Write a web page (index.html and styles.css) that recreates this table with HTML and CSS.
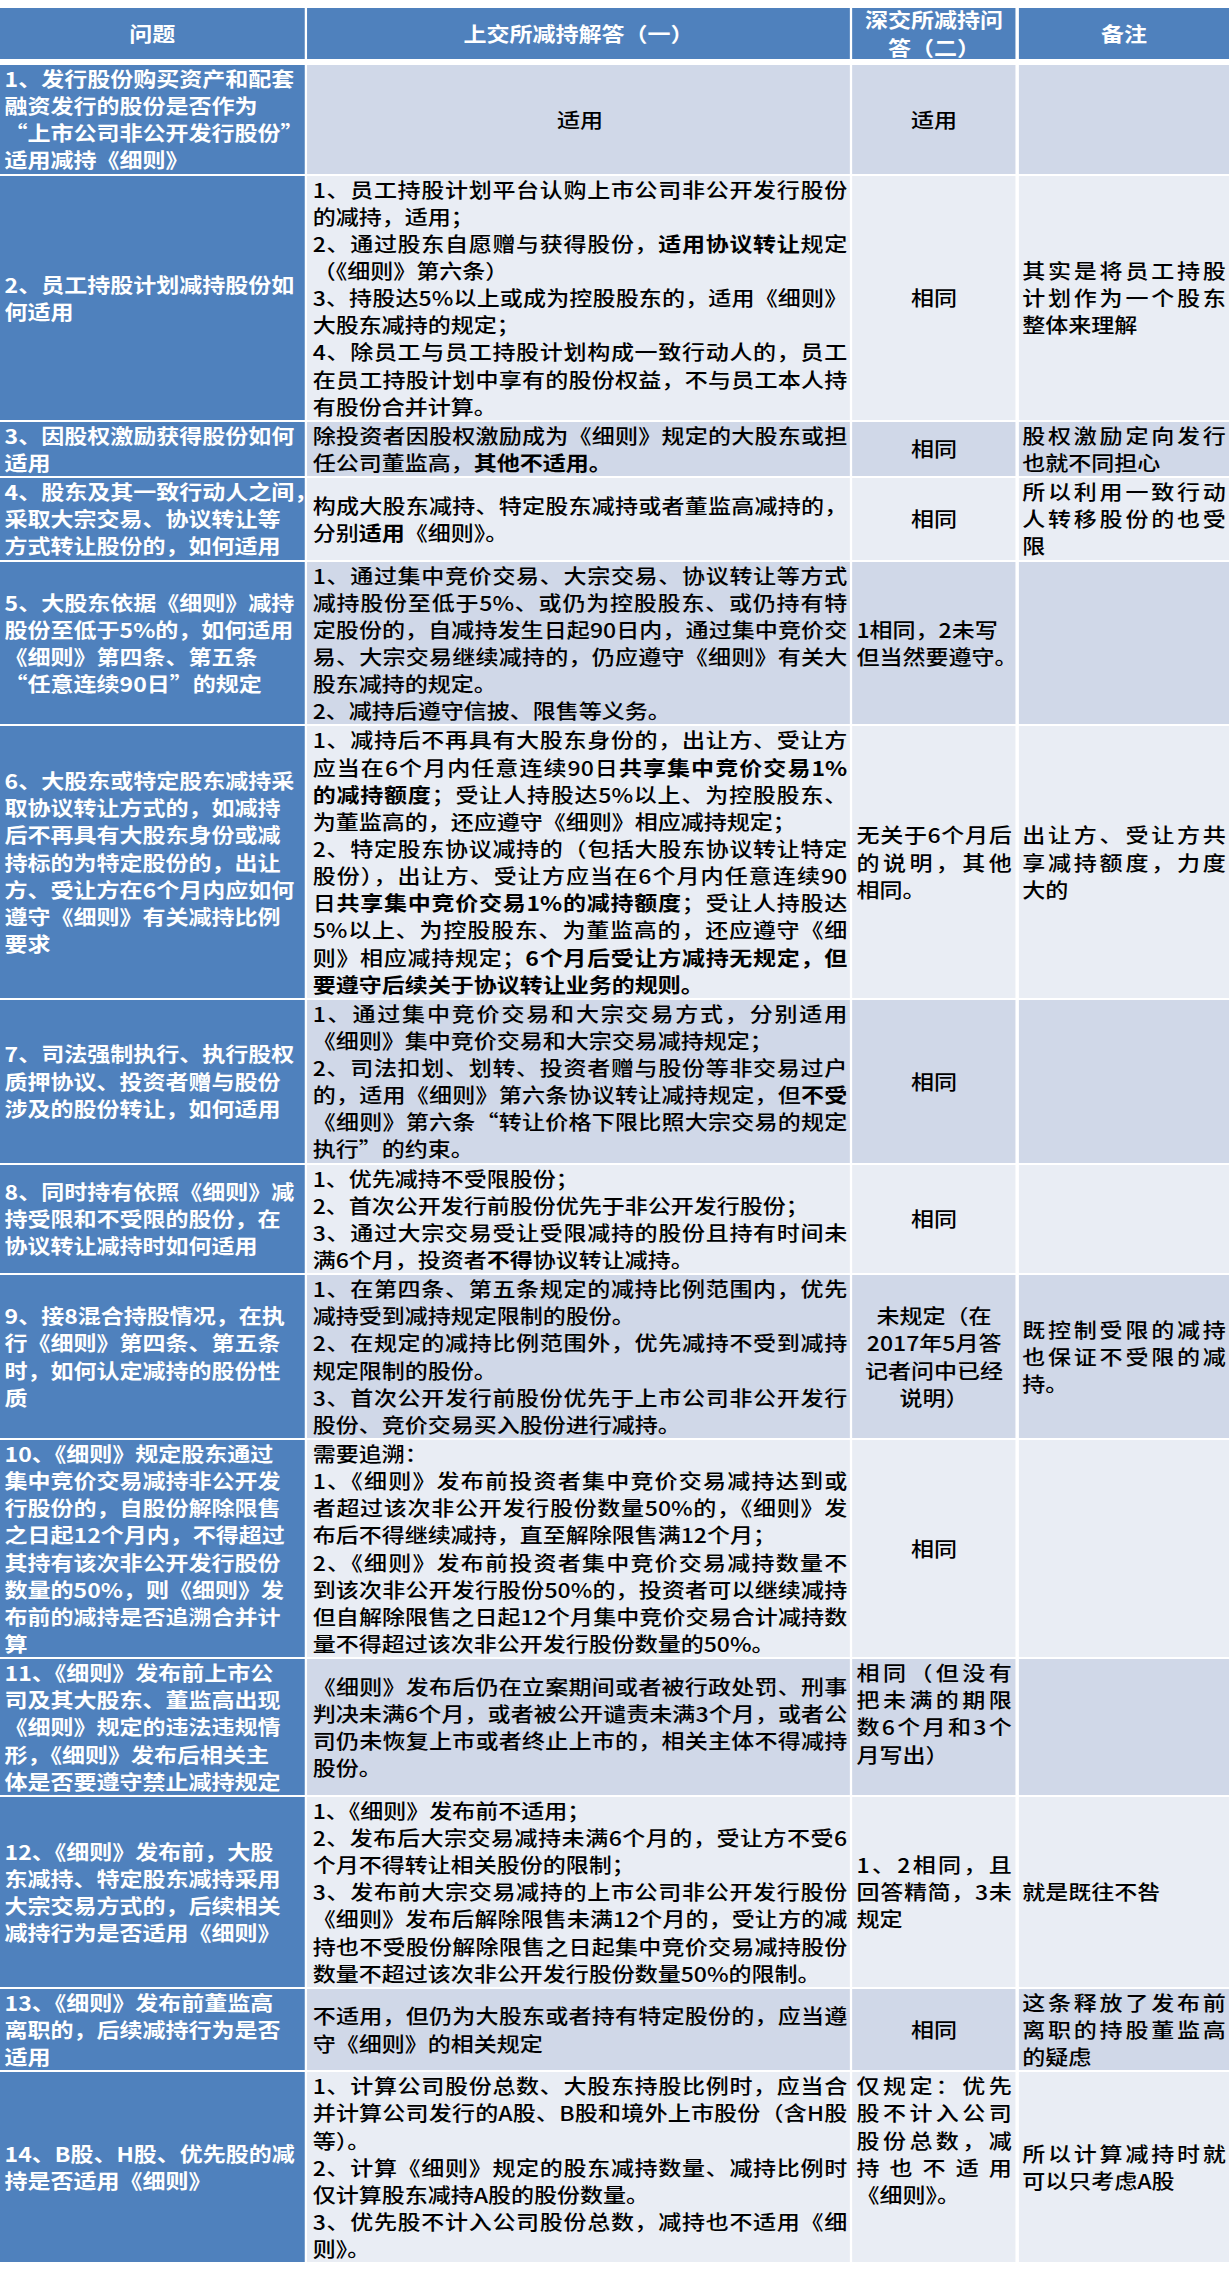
FILE: index.html
```html
<!DOCTYPE html>
<html lang="zh-CN">
<head>
<meta charset="utf-8">
<title>减持细则问答对比</title>
<link rel="stylesheet" href="styles.css">
</head>
<body>
<div class="page">
<div class="sheet">
  <div class="grid head">
    <div class="c h">问题</div>
    <div class="c h">上交所减持解答（一）</div>
    <div class="c h"><div>深交所减持问</div><div>答（二）</div></div>
    <div class="c h">备注</div>
  </div>
  <div class="grid body">
    <!-- 1 -->
    <div class="r d">
      <div class="c q"><div>1、发行股份购买资产和配套</div><div>融资发行的股份是否作为</div><div>“上市公司非公开发行股份”</div><div>适用减持《细则》</div></div>
      <div class="c a mid">适用</div>
      <div class="c s mid">适用</div>
      <div class="c n"></div>
    </div>
    <!-- 2 -->
    <div class="r l">
      <div class="c q"><div>2、员工持股计划减持股份如</div><div>何适用</div></div>
      <div class="c a">
        <div class="j">1、员工持股计划平台认购上市公司非公开发行股份</div>
        <div class="j e">的减持，适用；</div>
        <div class="j">2、通过股东自愿赠与获得股份，<b>适用协议转让</b>规定</div>
        <div class="j e">（《细则》第六条）</div>
        <div class="j">3、持股达5%以上或成为控股股东的，适用《细则》</div>
        <div class="j e">大股东减持的规定；</div>
        <div class="j">4、除员工与员工持股计划构成一致行动人的，员工</div>
        <div class="j">在员工持股计划中享有的股份权益，不与员工本人持</div>
        <div class="j e">有股份合并计算。</div>
      </div>
      <div class="c s mid">相同</div>
      <div class="c n"><div class="j">其实是将员工持股</div><div class="j">计划作为一个股东</div><div class="j e">整体来理解</div></div>
    </div>
    <!-- 3 -->
    <div class="r d">
      <div class="c q"><div>3、因股权激励获得股份如何</div><div>适用</div></div>
      <div class="c a">
        <div class="j">除投资者因股权激励成为《细则》规定的大股东或担</div>
        <div class="j e">任公司董监高，<b>其他不适用。</b></div>
      </div>
      <div class="c s mid">相同</div>
      <div class="c n"><div class="j">股权激励定向发行</div><div class="j e">也就不同担心</div></div>
    </div>
    <!-- 4 -->
    <div class="r l">
      <div class="c q"><div>4、股东及其一致行动人之间，</div><div>采取大宗交易、协议转让等</div><div>方式转让股份的，如何适用</div></div>
      <div class="c a">
        <div class="j">构成大股东减持、特定股东减持或者董监高减持的，</div>
        <div class="j e">分别<b>适用</b>《细则》。</div>
      </div>
      <div class="c s mid">相同</div>
      <div class="c n"><div class="j">所以利用一致行动</div><div class="j">人转移股份的也受</div><div class="j e">限</div></div>
    </div>
    <!-- 5 -->
    <div class="r d">
      <div class="c q"><div>5、大股东依据《细则》减持</div><div>股份至低于5%的，如何适用</div><div>《细则》第四条、第五条</div><div>“任意连续90日”的规定</div></div>
      <div class="c a">
        <div class="j">1、通过集中竞价交易、大宗交易、协议转让等方式</div>
        <div class="j">减持股份至低于5%、或仍为控股股东、或仍持有特</div>
        <div class="j">定股份的，自减持发生日起90日内，通过集中竞价交</div>
        <div class="j">易、大宗交易继续减持的，仍应遵守《细则》有关大</div>
        <div class="j e">股东减持的规定。</div>
        <div class="j e">2、减持后遵守信披、限售等义务。</div>
      </div>
      <div class="c s"><div class="nw">1相同，2未写</div><div class="nw">但当然要遵守。</div></div>
      <div class="c n"></div>
    </div>
    <!-- 6 -->
    <div class="r l">
      <div class="c q"><div>6、大股东或特定股东减持采</div><div>取协议转让方式的，如减持</div><div>后不再具有大股东身份或减</div><div>持标的为特定股份的，出让</div><div>方、受让方在6个月内应如何</div><div>遵守《细则》有关减持比例</div><div>要求</div></div>
      <div class="c a">
        <div class="j">1、减持后不再具有大股东身份的，出让方、受让方</div>
        <div class="j">应当在6个月内任意连续90日<b>共享集中竞价交易1%</b></div>
        <div class="j"><b>的减持额度</b>；受让人持股达5%以上、为控股股东、</div>
        <div class="j e">为董监高的，还应遵守《细则》相应减持规定；</div>
        <div class="j">2、特定股东协议减持的（包括大股东协议转让特定</div>
        <div class="j">股份），出让方、受让方应当在6个月内任意连续90</div>
        <div class="j">日<b>共享集中竞价交易1%的减持额度</b>；受让人持股达</div>
        <div class="j">5%以上、为控股股东、为董监高的，还应遵守《细</div>
        <div class="j">则》相应减持规定；<b>6个月后受让方减持无规定，但</b></div>
        <div class="j e"><b>要遵守后续关于协议转让业务的规则。</b></div>
      </div>
      <div class="c s"><div class="j">无关于6个月后</div><div class="j">的说明，其他</div><div class="j e">相同。</div></div>
      <div class="c n"><div class="j">出让方、受让方共</div><div class="j">享减持额度，力度</div><div class="j e">大的</div></div>
    </div>
    <!-- 7 -->
    <div class="r d">
      <div class="c q"><div>7、司法强制执行、执行股权</div><div>质押协议、投资者赠与股份</div><div>涉及的股份转让，如何适用</div></div>
      <div class="c a">
        <div class="j">1、通过集中竞价交易和大宗交易方式，分别适用</div>
        <div class="j e">《细则》集中竞价交易和大宗交易减持规定；</div>
        <div class="j">2、司法扣划、划转、投资者赠与股份等非交易过户</div>
        <div class="j">的，适用《细则》第六条协议转让减持规定，但<b>不受</b></div>
        <div class="j">《细则》第六条“转让价格下限比照大宗交易的规定</div>
        <div class="j e">执行”的约束。</div>
      </div>
      <div class="c s mid">相同</div>
      <div class="c n"></div>
    </div>
    <!-- 8 -->
    <div class="r l">
      <div class="c q"><div>8、同时持有依照《细则》减</div><div>持受限和不受限的股份，在</div><div>协议转让减持时如何适用</div></div>
      <div class="c a">
        <div class="j e">1、优先减持不受限股份；</div>
        <div class="j e">2、首次公开发行前股份优先于非公开发行股份；</div>
        <div class="j">3、通过大宗交易受让受限减持的股份且持有时间未</div>
        <div class="j e">满6个月，投资者<b>不得</b>协议转让减持。</div>
      </div>
      <div class="c s mid">相同</div>
      <div class="c n"></div>
    </div>
    <!-- 9 -->
    <div class="r d">
      <div class="c q"><div>9、接8混合持股情况，在执</div><div>行《细则》第四条、第五条</div><div>时，如何认定减持的股份性</div><div>质</div></div>
      <div class="c a">
        <div class="j">1、在第四条、第五条规定的减持比例范围内，优先</div>
        <div class="j e">减持受到减持规定限制的股份。</div>
        <div class="j">2、在规定的减持比例范围外，优先减持不受到减持</div>
        <div class="j e">规定限制的股份。</div>
        <div class="j">3、首次公开发行前股份优先于上市公司非公开发行</div>
        <div class="j e">股份、竞价交易买入股份进行减持。</div>
      </div>
      <div class="c s mid"><div>未规定（在</div><div>2017年5月答</div><div>记者问中已经</div><div>说明）</div></div>
      <div class="c n"><div class="j">既控制受限的减持</div><div class="j">也保证不受限的减</div><div class="j e">持。</div></div>
    </div>
    <!-- 10 -->
    <div class="r l">
      <div class="c q"><div>10、《细则》规定股东通过</div><div>集中竞价交易减持非公开发</div><div>行股份的，自股份解除限售</div><div>之日起12个月内，不得超过</div><div>其持有该次非公开发行股份</div><div>数量的50%，则《细则》发</div><div>布前的减持是否追溯合并计</div><div>算</div></div>
      <div class="c a">
        <div class="j e">需要追溯：</div>
        <div class="j">1、《细则》发布前投资者集中竞价交易减持达到或</div>
        <div class="j">者超过该次非公开发行股份数量50%的，《细则》发</div>
        <div class="j e">布后不得继续减持，直至解除限售满12个月；</div>
        <div class="j">2、《细则》发布前投资者集中竞价交易减持数量不</div>
        <div class="j">到该次非公开发行股份50%的，投资者可以继续减持</div>
        <div class="j">但自解除限售之日起12个月集中竞价交易合计减持数</div>
        <div class="j e">量不得超过该次非公开发行股份数量的50%。</div>
      </div>
      <div class="c s mid">相同</div>
      <div class="c n"></div>
    </div>
    <!-- 11 -->
    <div class="r d">
      <div class="c q"><div>11、《细则》发布前上市公</div><div>司及其大股东、董监高出现</div><div>《细则》规定的违法违规情</div><div>形，《细则》发布后相关主</div><div>体是否要遵守禁止减持规定</div></div>
      <div class="c a">
        <div class="j">《细则》发布后仍在立案期间或者被行政处罚、刑事</div>
        <div class="j">判决未满6个月，或者被公开谴责未满3个月，或者公</div>
        <div class="j">司仍未恢复上市或者终止上市的，相关主体不得减持</div>
        <div class="j e">股份。</div>
      </div>
      <div class="c s top"><div class="j">相同（但没有</div><div class="j">把未满的期限</div><div class="j">数6个月和3个</div><div class="j e">月写出）</div></div>
      <div class="c n"></div>
    </div>
    <!-- 12 -->
    <div class="r l">
      <div class="c q"><div>12、《细则》发布前，大股</div><div>东减持、特定股东减持采用</div><div>大宗交易方式的，后续相关</div><div>减持行为是否适用《细则》</div></div>
      <div class="c a">
        <div class="j e">1、《细则》发布前不适用；</div>
        <div class="j">2、发布后大宗交易减持未满6个月的，受让方不受6</div>
        <div class="j e">个月不得转让相关股份的限制；</div>
        <div class="j">3、发布前大宗交易减持的上市公司非公开发行股份</div>
        <div class="j">《细则》发布后解除限售未满12个月的，受让方的减</div>
        <div class="j">持也不受股份解除限售之日起集中竞价交易减持股份</div>
        <div class="j e">数量不超过该次非公开发行股份数量50%的限制。</div>
      </div>
      <div class="c s"><div class="j">1、2相同，且</div><div class="j">回答精简，3未</div><div class="j e">规定</div></div>
      <div class="c n"><div class="j e">就是既往不咎</div></div>
    </div>
    <!-- 13 -->
    <div class="r d">
      <div class="c q"><div>13、《细则》发布前董监高</div><div>离职的，后续减持行为是否</div><div>适用</div></div>
      <div class="c a">
        <div class="j">不适用，但仍为大股东或者持有特定股份的，应当遵</div>
        <div class="j e">守《细则》的相关规定</div>
      </div>
      <div class="c s mid">相同</div>
      <div class="c n"><div class="j">这条释放了发布前</div><div class="j">离职的持股董监高</div><div class="j e">的疑虑</div></div>
    </div>
    <!-- 14 -->
    <div class="r l">
      <div class="c q"><div>14、B股、H股、优先股的减</div><div>持是否适用《细则》</div></div>
      <div class="c a">
        <div class="j">1、计算公司股份总数、大股东持股比例时，应当合</div>
        <div class="j">并计算公司发行的A股、B股和境外上市股份（含H股</div>
        <div class="j e">等）。</div>
        <div class="j">2、计算《细则》规定的股东减持数量、减持比例时</div>
        <div class="j e">仅计算股东减持A股的股份数量。</div>
        <div class="j">3、优先股不计入公司股份总数，减持也不适用《细</div>
        <div class="j e">则》。</div>
      </div>
      <div class="c s top"><div class="j">仅规定：优先</div><div class="j">股不计入公司</div><div class="j">股份总数，减</div><div class="j">持也不适用</div><div class="j e">《细则》。</div></div>
      <div class="c n"><div class="j">所以计算减持时就</div><div class="j e">可以只考虑A股</div></div>
    </div>
  </div>
</div>
</div>
</body>
</html>
```

FILE: styles.css
```css
html, body {
  margin: 0;
  padding: 0;
  background: #ffffff;
}

body {
  font-family: "Noto Sans CJK SC", "Microsoft YaHei", sans-serif;
  color: #000000;
}

.page {
  padding-top: 8px;
}

/* the source image is stretched horizontally, so the table is drawn narrower and widened */
.sheet {
  width: 1068.9px;
  transform: scaleX(1.15);
  transform-origin: 0 0;
}

.grid {
  display: grid;
  grid-template-columns: 264.8px 471.3px 142px 183px;
  column-gap: 2.6px;
  row-gap: 2px;
}

.head {
  margin-bottom: 6px;
}

.r {
  display: contents;
}

.c {
  font-size: 20px;
  line-height: 27.14px;
  font-weight: 500;
  display: flex;
  flex-direction: column;
  justify-content: center;
  min-width: 0;
}

.h {
  height: 51px;
  background: #4f81bd;
  color: #ffffff;
  font-weight: 700;
  text-align: center;
  align-items: center;
}

.h > div {
  white-space: nowrap;
}

.r.d > .c {
  background: #d0d8e8;
}

.r.l > .c {
  background: #e9edf4;
}

.r > .c.q {
  background: #4f81bd;
  color: #ffffff;
  font-weight: 700;
  padding-left: 4px;
  white-space: nowrap;
}

.a {
  padding: 0 2px 0 4.5px;
}

.s {
  padding: 0 3.5px;
}

.n {
  padding: 0 3px;
}

.mid {
  text-align: center;
}

.top {
  justify-content: flex-start;
}

.j {
  text-align: justify;
  text-align-last: justify;
}

.j.e {
  text-align-last: left;
}

.nw {
  white-space: nowrap;
}

b {
  font-weight: 700;
}
```
